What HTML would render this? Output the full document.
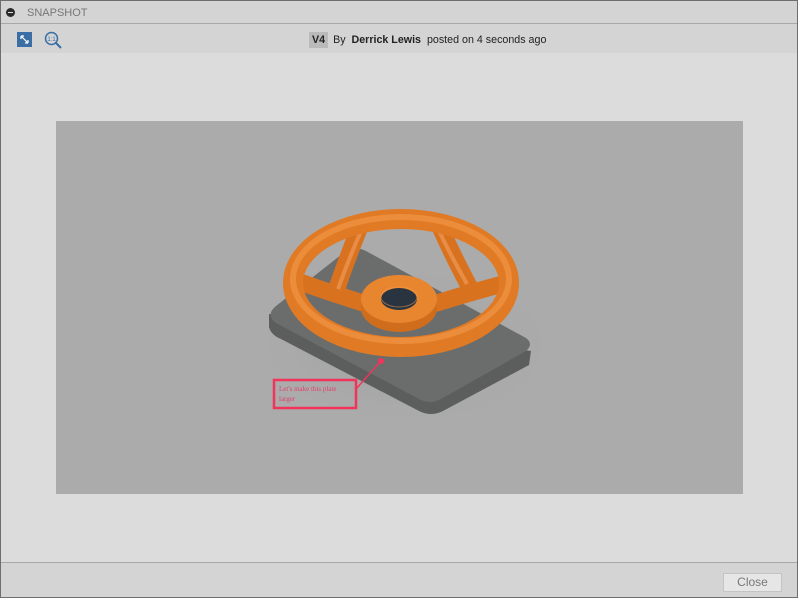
<!DOCTYPE html>
<html><head><meta charset="utf-8"><style>
*{margin:0;padding:0;box-sizing:border-box}
body{width:798px;height:598px;overflow:hidden;font-family:"Liberation Sans",Arial,sans-serif;background:#fff}
.win{position:absolute;left:0;top:0;width:798px;height:598px;border:1px solid #6e6e6e;background:#dcdcdc}
.title{position:absolute;left:0;top:0;width:796px;height:23px;background:#d4d4d4;border-bottom:1px solid #a8a8a8}
.title .dot{position:absolute;left:5px;top:7px;width:9px;height:9px;border-radius:50%;background:#2a2a2a}
.title .dot:after{content:"";position:absolute;left:2px;top:4px;width:5px;height:1px;background:#ddd}
.title span{position:absolute;left:26px;top:6px;font-size:11px;color:#777}
.tool{position:absolute;left:0;top:23px;width:796px;height:29px;background:#d4d4d4}
.info{position:absolute;left:308px;top:8px;font-size:10.7px;color:#222;white-space:nowrap}
.v4{display:inline-block;background:#bababa;padding:2px 3px;font-weight:bold;margin-right:5px}
.img{position:absolute;left:55px;top:120px;width:687px;height:373px;background:#ababab;overflow:hidden}
.foot{position:absolute;left:0;top:561px;width:796px;height:35px;background:#d4d4d4;border-top:1px solid #a8a8a8}
.close{position:absolute;left:722px;top:10px;width:59px;height:19px;background:#e6e6e6;border:1px solid #c4c4c4;font-size:12px;color:#777;text-align:center;line-height:17px}
</style></head><body>
<div class="win">
<div class="title"><div class="dot"></div><span>SNAPSHOT</span></div>
<div class="tool">
<svg style="position:absolute;left:16px;top:8px" width="15" height="15"><rect width="15" height="15" fill="#3a6ea5"/><path d="M4 4l7 7M4 4h3M4 4v3M11 11h-3M11 11v-3" stroke="#fff" stroke-width="1.2" fill="none"/></svg>
<svg style="position:absolute;left:43px;top:7px" width="18" height="18"><circle cx="7.5" cy="7.5" r="6" fill="none" stroke="#3a6ea5" stroke-width="1.5"/><path d="M12 12l5 5" stroke="#3a6ea5" stroke-width="2"/><text x="7.5" y="10" font-size="6" text-anchor="middle" fill="#3a6ea5" font-family="Liberation Sans">1:1</text></svg>
<div class="info"><span class="v4">V4</span>By&nbsp; <b>Derrick Lewis</b>&nbsp; posted on 4 seconds ago</div>
</div>
<div class="img">
<svg width="687" height="373" viewBox="55 120 687 373">
<defs><radialGradient id="sh" cx="50%" cy="50%" r="50%"><stop offset="0" stop-color="#888" stop-opacity=".5"/><stop offset="1" stop-color="#ababab" stop-opacity="0"/></radialGradient></defs>
<ellipse cx="405" cy="345" rx="160" ry="85" fill="url(#sh)"/>
<path d="M268 313 L268 326 Q270 334 280 338 L418 410 Q430 416 442 410 L528 364 L530 350 Z" fill="#5c5e5d"/>
<path d="M275 305 L345 250 Q355 245 365 250 L525 337 Q533 343 525 350 L440 398 Q430 404 418 398 L275 322 Q264 314 275 305 Z" fill="#6b6d6c"/>
<g fill="none" stroke="#d9721f" stroke-width="17" stroke-linecap="round">
<path d="M335 290 Q345 260 358 228"/><path d="M440 228 Q452 255 468 285"/><path d="M302 282 Q330 292 362 302"/><path d="M436 302 Q468 292 498 284"/>
</g>
<g fill="none" stroke="#f0a060" stroke-width="4" opacity=".6">
<path d="M337 288 Q347 260 360 230"/><path d="M438 230 Q450 255 466 283"/>
</g>
<ellipse cx="400" cy="282" rx="108" ry="64" fill="none" stroke="#e07a25" stroke-width="20"/>
<ellipse cx="400" cy="278" rx="108" ry="62" fill="none" stroke="#f29a4a" stroke-width="6" opacity=".6"/>
<ellipse cx="398" cy="307" rx="38" ry="24" fill="#cf6d1c"/>
<ellipse cx="398" cy="298" rx="38" ry="24" fill="#e8852f"/>
<ellipse cx="398" cy="298" rx="18" ry="11" fill="#2a3440"/>
<ellipse cx="398" cy="296" rx="18" ry="10" fill="none" stroke="#f3a258" stroke-width="1" opacity=".5"/>
<path d="M380 360 L355 388" stroke="#f0345a" stroke-width="1.5"/>
<circle cx="380" cy="360" r="3" fill="#f0345a"/>
<rect x="273" y="379" width="82" height="28" fill="none" stroke="#f0345a" stroke-width="2.5"/>
<text x="278" y="390" font-size="7" fill="#e0406a" font-family="Liberation Serif">Let's make this plate</text>
<text x="278" y="400" font-size="7" fill="#e0406a" font-family="Liberation Serif">larger</text>
</svg>
</div>
<div class="foot"><div class="close">Close</div></div>
</div>
</body></html>
